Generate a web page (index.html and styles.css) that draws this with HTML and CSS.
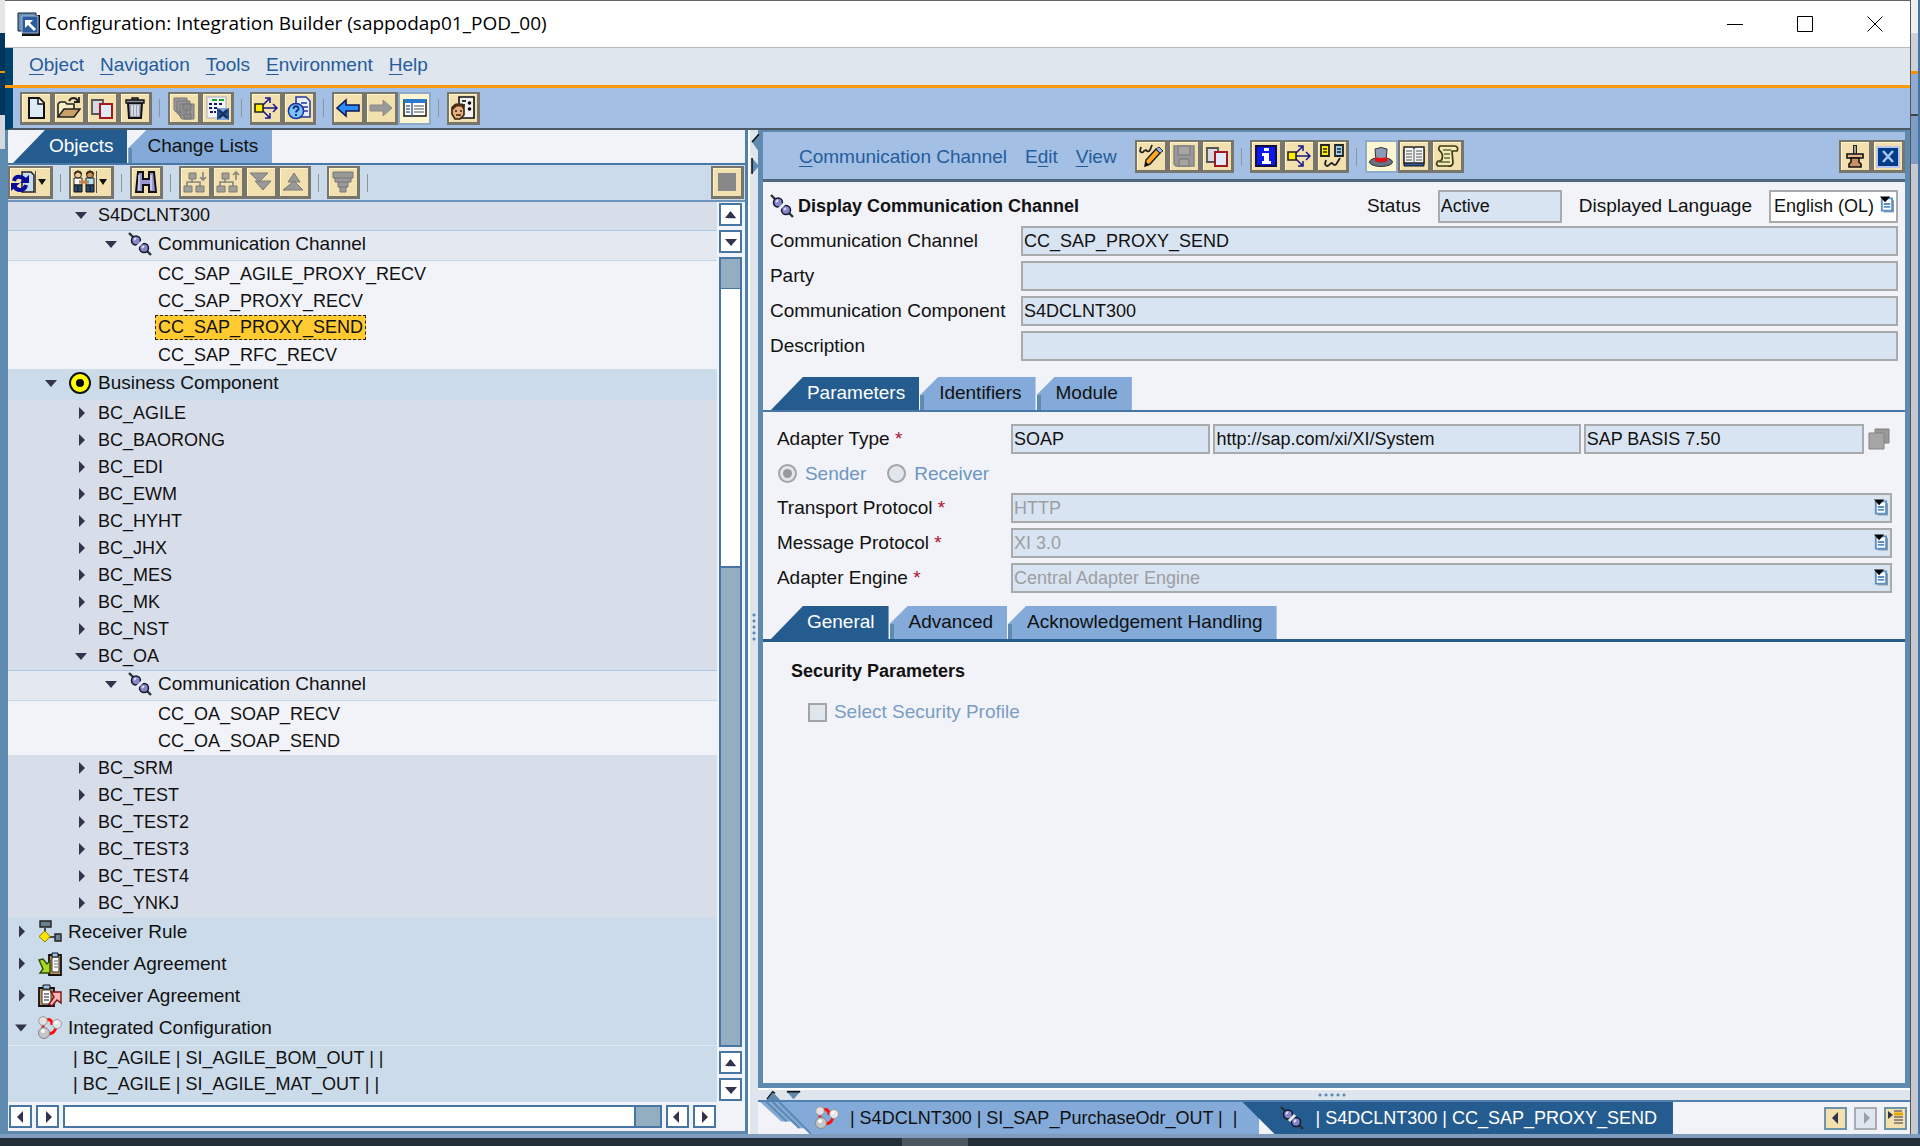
FILE: index.html
```html
<!DOCTYPE html>
<html lang="en">
<head>
<meta charset="utf-8">
<title>Configuration: Integration Builder (sappodap01_POD_00)</title>
<link rel="stylesheet" href="styles.css">
</head>
<body>
<svg class="defs" aria-hidden="true">
  <symbol id="new" viewBox="0 0 24 24"><path d="M5 2h10l5 5v15H5z" fill="#dcecf8" stroke="#111" stroke-width="2"/><path d="M14 2v6h6" fill="#fff" stroke="#111" stroke-width="1.5"/></symbol>
  <symbol id="open" viewBox="0 0 24 24"><path d="M1 21V8l2-2h5l2 2h7v5" fill="#f5efc4" stroke="#222" stroke-width="1.6"/><path d="M1 21l6-8h16l-6 8z" fill="#c8a068" stroke="#222" stroke-width="1.6"/><path d="M12 5c2-4 7-4 9 0M22 1v5h-5" fill="none" stroke="#222" stroke-width="1.8"/></symbol>
  <symbol id="copy" viewBox="0 0 24 24"><path d="M2 4h11v14H2z" fill="#d8d8e0" stroke="#555" stroke-width="1.8"/><path d="M10 8h12v14H10z" fill="#dfeaf6" stroke="#a01822" stroke-width="2"/></symbol>
  <symbol id="trash" viewBox="0 0 24 24"><path d="M5 7h14l-1 15H6z" fill="#9aa3b0" stroke="#111" stroke-width="2"/><path d="M9 9v11M12 9v11M15 9v11" stroke="#e8ecf2" stroke-width="1.5"/><path d="M3 4h18v3H3zM9 2h6v2H9z" fill="#8a93a0" stroke="#111" stroke-width="1.4"/></symbol>
  <symbol id="saveall" viewBox="0 0 24 24" fill="#999" stroke="#777"><path d="M2 2h13v14H4l-2-2zM5 5h13v14H7l-2-2zM8 8h14v15H10l-2-2z"/><path d="M11 8h8v6h-8zM12 18h7v5h-7z" fill="#8a8a8a"/></symbol>
  <symbol id="listx" viewBox="0 0 24 24"><path d="M2 1h19v21H2z" fill="#f2f5fa" stroke="#aab" /><path d="M7 4h5M14 4h5" stroke="#18a028" stroke-width="2"/><path d="M4 8h3M9 8h3M14 8h3M4 12h3M9 12h3M5 16h3M9 16h2" stroke="#18186a" stroke-width="1.8"/><path d="M12 12h12v12H12z" fill="#2a4f9a"/><path d="M12 12l6 4 6-4M12 24l6-4 6 4" fill="#7fa8d8"/><path d="M14 14l8 8M22 14l-8 8" stroke="#16305e" stroke-width="2.400"/></symbol>
  <symbol id="where" viewBox="0 0 24 24"><path d="M8 12h14M8 10l7-7M8 14l7 7M19 8l4 4-4 4M11 2h5v5M11 22h5v-5" fill="none" stroke="#14148c" stroke-width="1.500"/><path d="M1 8h8v8H1z" fill="#ffee00" stroke="#222" stroke-width="1.6"/></symbol>
  <symbol id="help" viewBox="0 0 24 24"><path d="M9 1h10l4 4v16H9z" fill="#e8edf8" stroke="#223a9a" stroke-width="1.5"/><path d="M14 7h6M15 11h6M17 15h4" stroke="#223a9a" stroke-width="1.5"/><circle cx="9" cy="15" r="7.6" fill="#7cc4f8" stroke="#1834a0" stroke-width="1.5"/><path d="M6.5 13c0-4 5.500-3.500 5 0-.5 1.500-2.500 2-2.500 3.500M9 18v2" fill="none" stroke="#102a90" stroke-width="2"/></symbol>
  <symbol id="back" viewBox="0 0 24 24"><path d="M1 12l9-8v5h13v6H10v5z" fill="#2c8cff" stroke="#101850" stroke-width="1.6"/></symbol>
  <symbol id="fwd" viewBox="0 0 24 24"><path d="M23 12l-9-8v5H1v6h13v5z" fill="#999" stroke="#888"/></symbol>
  <symbol id="tree" viewBox="0 0 24 24"><path d="M1 4h22v16H1z" fill="#fff" stroke="#111" stroke-width="1.4"/><path d="M1 3h22v4H1z" fill="#2a7ac8"/><path d="M9 7v13M3 10h4M3 13h4M3 16h4" stroke="#4a6a9a" stroke-width="1.600"/><path d="M11 10h10M11 13h10M11 16h10" stroke="#888" stroke-width="1.400"/></symbol>
  <symbol id="person" viewBox="0 0 24 24"><path d="M8 1h15v21H8z" fill="#f2f2f2" stroke="#111" stroke-width="1.6"/><path d="M11 5h4M11 9h3" stroke="#333" stroke-width="2"/><circle cx="18.500" cy="7" r="1.8"/><circle cx="18.500" cy="13" r="1.800"/><path d="M1 13c0-6 12-6 12 0v6l-4 4H4l-3-5z" fill="#e8b080" stroke="#3a2010" stroke-width="1.600"/><path d="M1 13l4-4h6l2 3" stroke="#4a2a10" stroke-width="3" fill="none"/><path d="M4 15h2M9 15h2M5 19h5" stroke="#3a2010" stroke-width="1.600"/></symbol>
  <symbol id="refresh" viewBox="0 0 24 24"><path d="M11 2h9l3 3v17H11z" fill="#c8dcf0" stroke="#222" stroke-width="1.5"/><path d="M3 11q1-5 6-4 3 0 5 3M15 15q-1 5-6 5-4 0-6-4" fill="none" stroke="#0a0a98" stroke-width="4"/><path d="M18 5v8h-9zM0 21v-8h9z" fill="#0a0a98"/></symbol>
  <symbol id="people" viewBox="0 0 24 24"><path d="M2 8h8v7H2z" fill="#fff" stroke="#222"/><path d="M14 8h8v7h-8z" fill="#aee4f4" stroke="#222"/><path d="M2 15h8v7H2zM14 15h8v7h-8z" fill="#28486e" stroke="#111"/><circle cx="6" cy="4.500" r="3.500" fill="#f0c8a0" stroke="#222"/><circle cx="18" cy="4.500" r="3.500" fill="#c89050" stroke="#222"/><path d="M2.500 4q3.500-5 7 0M14.500 4q3.500-5 7 0" fill="none" stroke="#3a2a14" stroke-width="2"/><path d="M7 12h10" stroke="#c08050" stroke-width="3"/><path d="M6 16v6M18 16v6" stroke="#111"/></symbol>
  <symbol id="find" viewBox="0 0 24 24"><path d="M4 2h5v7h6V2h5l2 20h-7v-7H9v7H2z" fill="#9a98d0" stroke="#111" stroke-width="2"/><path d="M5 5v15M17 5v15" stroke="#d4d4f4" stroke-width="1.600"/></symbol>
  <symbol id="expand" viewBox="0 0 24 24"><path d="M6 3h7v6H6zM1 16h8v6H1zM13 16h8v6h-8z" fill="#a0a098" stroke="#7a7a74"/><path d="M9 9v4M4 16v-4h13v4M20 2v8M17 7l3 3 3-3" fill="none" stroke="#85857d" stroke-width="1.600"/></symbol>
  <symbol id="collapse" viewBox="0 0 24 24"><path d="M6 3h7v6H6zM1 16h8v6H1zM13 16h8v6h-8z" fill="#a0a098" stroke="#7a7a74"/><path d="M9 9v4M4 16v-4h13v4M20 10V2M17 5l3-3 3 3" fill="none" stroke="#85857d" stroke-width="1.600"/></symbol>
  <symbol id="downs" viewBox="0 0 24 24" fill="#999" stroke="#7c7c74"><path d="M6 11h16l-8 9z"/><path d="M1 3h18l-9 9z"/></symbol>
  <symbol id="ups" viewBox="0 0 24 24" fill="#999" stroke="#7c7c74"><path d="M6 12h12l-6-9z"/><path d="M1 20h20l-9-9z"/></symbol>
  <symbol id="filter" viewBox="0 0 24 24" fill="#999" stroke="#777"><path d="M2 2h20v6h-2v4h-3v5h-2v5H9v-5H7v-5H4V8H2z"/><path d="M3 8h18M6 12h12M8 17h8" /></symbol>
  <symbol id="stop" viewBox="0 0 24 24"><path d="M3 3h18v18H3z" fill="#888"/></symbol>
  <symbol id="plug" viewBox="0 0 24 24"><path d="M1 1l22 22" stroke="#233" stroke-width="2.400"/><circle cx="8" cy="8.500" r="4.500" fill="#8486cc" stroke="#15152c" stroke-width="1.500"/><circle cx="16" cy="16" r="4.500" fill="#8486cc" stroke="#15152c" stroke-width="1.500"/><path d="M9 15l6-6" stroke="#edf0f8" stroke-width="3"/><path d="M6 8l2-2M14 16l2-2" stroke="#dcdcf8" stroke-width="2"/></symbol>
  <symbol id="bcomp" viewBox="0 0 24 24"><circle cx="12" cy="12" r="10" fill="#ffff00" stroke="#111" stroke-width="2"/><circle cx="12" cy="12" r="4"/></symbol>
  <symbol id="rule" viewBox="0 0 24 24"><path d="M7 8v7M10 17h8" stroke="#222" stroke-width="1.600"/><path d="M2 1h11v6H2z" fill="#66808e" stroke="#222" stroke-width="1.400"/><path d="M7 11l5 5.500-5 5.500-6-5.500z" fill="#ffe600" stroke="#997a00"/><path d="M17 14h6v7h-6z" fill="#6c8496" stroke="#222" stroke-width="1.400"/></symbol>
  <symbol id="sagree" viewBox="0 0 24 24"><path d="M11 3h12v20H11z" fill="#c89858" stroke="#111" stroke-width="1.800"/><path d="M14 5h7v15h-7z" fill="#fff" stroke="#333"/><path d="M14 1h6v4h-6z" fill="#9cc4e4" stroke="#111"/><path d="M16 9h4M16 12h4M16 15h4" stroke="#666"/><path d="M1 8l4-1 4 5 3-3v12H2l3-4z" fill="#a8d820" stroke="#2c4a08" stroke-width="1.400"/></symbol>
  <symbol id="ragree" viewBox="0 0 24 24"><path d="M1 4h15v18H1z" fill="#c89858" stroke="#111" stroke-width="1.800"/><path d="M4 6h9v14H4z" fill="#fff" stroke="#333"/><path d="M5 1h7v4H5z" fill="#9cc4e4" stroke="#111"/><path d="M6 10h5M6 13h5M6 16h5" stroke="#666" stroke-width="1.400"/><path d="M13 8h10v11l-4-3-5 6-3-2 5-7z" fill="#ffb4b4" stroke="#7a1010" stroke-width="1.400"/></symbol>
  <symbol id="iconf" viewBox="0 0 24 24"><path d="M8 4q6-2 6 5M18 11q-1 6-7 7M5 8v5" fill="none" stroke="#ff1010" stroke-width="3"/><circle cx="5" cy="5" r="4.300" fill="#e2e2e2" stroke="#999"/><circle cx="19" cy="8" r="4.500" fill="#e8e8e8" stroke="#999"/><circle cx="6" cy="17" r="5.500" fill="#c6c6c6" stroke="#888"/><circle cx="5" cy="15" r="2" fill="#fff"/><circle cx="18" cy="6.500" r="1.500" fill="#fff"/></symbol>
  <symbol id="edit" viewBox="0 0 24 24"><path d="M2 3l-1 4q2 3 4 0l2-1q2 3 4 0l2-5" fill="none" stroke="#222" stroke-width="1.700"/><path d="M6 22l1-6L17 5l4 4L11 20z" fill="#ffa820" stroke="#222" stroke-width="1.500"/><path d="M17 5l3-2 4 4-3 2z" fill="#9ab4e8" stroke="#333"/><path d="M6 22l1-4 3 3z"/></symbol>
  <symbol id="save" viewBox="0 0 24 24" fill="#999" stroke="#848484" stroke-width="1.500"><path d="M2 2h20v20H4l-2-2z"/><path d="M6 2h12v9H6zM7 15h10v7H7z" fill="#a6a6a0"/></symbol>
  <symbol id="info" viewBox="0 0 24 24"><path d="M2 2h20v20H2z" fill="#0c18f0" stroke="#101040" stroke-width="2"/><path d="M10 4h5v3h-5zM8 9h7v8h2v3H8v-3h2v-5H8z" fill="#fff"/></symbol>
  <symbol id="compare" viewBox="0 0 24 24"><path d="M1 1h8v11H1z" fill="#fff000" stroke="#222" stroke-width="1.800"/><path d="M15 1h8v11h-8z" fill="#9ccdf0" stroke="#222" stroke-width="1.800"/><path d="M3 5h4M3 8h4M17 5h4M17 8h4" stroke="#222" stroke-width="1.400"/><path d="M6 16l-1 4q2 4 5 0l2-1q3 4 5 0l3-5" fill="none" stroke="#222" stroke-width="1.800"/></symbol>
  <symbol id="hat" viewBox="0 0 24 24"><ellipse cx="12" cy="17" rx="11.500" ry="4.500" fill="#6a7080" stroke="#333"/><path d="M6 4q6-3 12 0l-1 12q-5 2-10 0z" fill="#8c9ab4" stroke="#334"/><path d="M6 12q6 2 12 0v4q-6 2-12 0z" fill="#ee1010"/></symbol>
  <symbol id="book" viewBox="0 0 24 24"><path d="M2 5h20v17H2z" fill="#2a5aa0" stroke="#111"/><path d="M2 3h9l1 1 1-1h9v16H2z" fill="#f4f4f4" stroke="#222" stroke-width="1.400"/><path d="M12 4v16M4 7h6M4 10h6M4 13h6M4 16h6M14 7h6M14 10h6M14 13h6M14 16h6" stroke="#555"/></symbol>
  <symbol id="scroll" viewBox="0 0 24 24"><path d="M5 2h15q4 1 2 5h-5l1 12q-1 4-5 3H3q-3-2 0-5h3q3-5 0-9-4-3-1-6z" fill="#f2ecb4" stroke="#3a3a18" stroke-width="1.700"/><path d="M8 6h8M9 10h6M9 14h6M4 18h11" stroke="#66663a" stroke-width="1.400"/></symbol>
  <symbol id="pin" viewBox="0 0 24 24"><path d="M12 1v10" stroke="#222" stroke-width="4"/><path d="M12 2v8" stroke="#ccc" stroke-width="1.500"/><path d="M4 10h16v4H4z" fill="#e8b88c" stroke="#111" stroke-width="1.600"/><path d="M8 14h8v4l2 2v3H6v-3l2-2z" fill="#c89060" stroke="#111" stroke-width="1.600"/></symbol>
  <symbol id="close" viewBox="0 0 24 24"><path d="M1 3h22v20H1z" fill="#003c88" stroke="#bcc4f0" stroke-width="2"/><path d="M7 7l10 11M17 7L7 18" stroke="#a8c4f0" stroke-width="2.600"/></symbol>
  <symbol id="drop" viewBox="0 0 16 18"><path d="M5 5h11v13H5z" fill="#8899aa"/><path d="M3 3h11v13H3z" fill="#fff" stroke="#5c90c4" stroke-width="2"/><path d="M5 9h7M5 12h7" stroke="#5c90c4" stroke-width="2"/><path d="M1 1h11L6.500 7z"/></symbol>
  <symbol id="au" viewBox="0 0 16 16"><path d="M4 12h10l-4-5z" fill="#c8d4e4"/><path d="M2 11h11L7.500 4z" fill="#33334d"/></symbol>
  <symbol id="ad" viewBox="0 0 16 16"><path d="M2 5h12L8 12z" fill="#33334d"/></symbol>
  <symbol id="al" viewBox="0 0 16 16"><path d="M10 2v12L4 8z" fill="#33334d"/></symbol>
  <symbol id="ar" viewBox="0 0 16 16"><path d="M6 2v12l6-6z" fill="#33334d"/></symbol>
</svg>

<div class="desk">
  <div class="behind behind-left"></div>
  <main class="window">
    <header class="titlebar">
      <svg class="app" viewBox="0 0 24 24"><path d="M5 3h18v21H5z" fill="#111"/><path d="M1 1h18v18H1z" fill="#6c90b4" stroke="#123"/><path d="M5 4h16v17H5z" fill="#2c5c9c" stroke="#9bd"/><path d="M8 8h8l-3 3 6 6-2 2-6-6-3 3z" fill="#fff"/></svg>
      <h1>Configuration: Integration Builder (sappodap01_POD_00)</h1>
      <button class="wbtn" aria-label="Minimize"><svg viewBox="0 0 16 16"><path d="M0 8.500h16"/></svg></button>
      <button class="wbtn" aria-label="Maximize"><svg viewBox="0 0 16 16"><path d="M.5.5h15v15H.5z"/></svg></button>
      <button class="wbtn" aria-label="Close"><svg viewBox="0 0 16 16"><path d="M.5.5l15 15M15.500.5l-15 15"/></svg></button>
    </header>
    <nav class="menubar">
      <a href="#"><u>O</u>bject</a><a href="#"><u>N</u>avigation</a><a href="#"><u>T</u>ools</a><a href="#"><u>E</u>nvironment</a><a href="#"><u>H</u>elp</a>
    </nav>
    <div class="toolbar main-tools">
      <button class="tb" aria-label="New"><svg><use href="#new"/></svg></button><button class="tb" aria-label="Open"><svg><use href="#open"/></svg></button><button class="tb" aria-label="Copy"><svg><use href="#copy"/></svg></button><button class="tb" aria-label="Delete"><svg><use href="#trash"/></svg></button>
      <i class="sep"></i>
      <button class="tb" aria-label="Save all"><svg><use href="#saveall"/></svg></button><button class="tb" aria-label="Close all"><svg><use href="#listx"/></svg></button>
      <i class="sep"></i>
      <button class="tb" aria-label="Where used"><svg><use href="#where"/></svg></button><button class="tb" aria-label="Help"><svg><use href="#help"/></svg></button>
      <i class="sep"></i>
      <button class="tb" aria-label="Back"><svg><use href="#back"/></svg></button><button class="tb" aria-label="Forward"><svg><use href="#fwd"/></svg></button><button class="tb on" aria-label="Navigation area"><svg><use href="#tree"/></svg></button>
      <i class="sep"></i>
      <button class="tb" aria-label="Personal settings"><svg><use href="#person"/></svg></button>
    </div>

    <div class="work">
      <section class="left">
        <div class="tabs left-tabs"><button class="tab active">Objects</button><button class="tab">Change Lists</button></div>
        <div class="toolbar tree-tools">
          <button class="tb split" aria-label="Refresh"><svg><use href="#refresh"/></svg><i class="caret"></i></button>
          <i class="sep"></i>
          <button class="tb split" aria-label="Scenarios"><svg><use href="#people"/></svg><i class="caret"></i></button>
          <i class="sep"></i>
          <button class="tb" aria-label="Find"><svg><use href="#find"/></svg></button>
          <i class="sep"></i>
          <button class="tb" aria-label="Expand node"><svg><use href="#expand"/></svg></button><button class="tb" aria-label="Collapse node"><svg><use href="#collapse"/></svg></button><button class="tb" aria-label="Expand all"><svg><use href="#downs"/></svg></button><button class="tb" aria-label="Collapse all"><svg><use href="#ups"/></svg></button>
          <i class="sep"></i>
          <button class="tb" aria-label="Filter"><svg><use href="#filter"/></svg></button>
          <i class="sep"></i>
          <button class="tb end" aria-label="Stop"><svg><use href="#stop"/></svg></button>
        </div>
        <div class="tree-area">
          <ul class="tree">
            <li class="row comp first open">S4DCLNT300</li>
            <li class="row chan open"><svg><use href="#plug"/></svg>Communication Channel</li>
            <li class="row leaf">CC_SAP_AGILE_PROXY_RECV</li>
            <li class="row leaf">CC_SAP_PROXY_RECV</li>
            <li class="row leaf"><span class="sel">CC_SAP_PROXY_SEND</span></li>
            <li class="row leaf">CC_SAP_RFC_RECV</li>
            <li class="row group open"><svg><use href="#bcomp"/></svg>Business Component</li>
            <li class="row comp shut">BC_AGILE</li>
            <li class="row comp shut">BC_BAORONG</li>
            <li class="row comp shut">BC_EDI</li>
            <li class="row comp shut">BC_EWM</li>
            <li class="row comp shut">BC_HYHT</li>
            <li class="row comp shut">BC_JHX</li>
            <li class="row comp shut">BC_MES</li>
            <li class="row comp shut">BC_MK</li>
            <li class="row comp shut">BC_NST</li>
            <li class="row comp open">BC_OA</li>
            <li class="row chan open"><svg><use href="#plug"/></svg>Communication Channel</li>
            <li class="row leaf">CC_OA_SOAP_RECV</li>
            <li class="row leaf">CC_OA_SOAP_SEND</li>
            <li class="row comp shut">BC_SRM</li>
            <li class="row comp shut">BC_TEST</li>
            <li class="row comp shut">BC_TEST2</li>
            <li class="row comp shut">BC_TEST3</li>
            <li class="row comp shut">BC_TEST4</li>
            <li class="row comp shut">BC_YNKJ</li>
            <li class="row root shut"><svg><use href="#rule"/></svg>Receiver Rule</li>
            <li class="row root shut"><svg><use href="#sagree"/></svg>Sender Agreement</li>
            <li class="row root shut"><svg><use href="#ragree"/></svg>Receiver Agreement</li>
            <li class="row root open"><svg><use href="#iconf"/></svg>Integrated Configuration</li>
            <li class="row conf rule-top">| BC_AGILE | SI_AGILE_BOM_OUT | |</li>
            <li class="row conf">| BC_AGILE | SI_AGILE_MAT_OUT | |</li>
          </ul>
          <div class="vscroll">
            <button class="sb" aria-label="Up"><svg><use href="#au"/></svg></button><button class="sb" aria-label="Down"><svg><use href="#ad"/></svg></button>
            <div class="vtrack"><div class="vthumb"></div></div>
            <button class="sb" aria-label="Up"><svg><use href="#au"/></svg></button><button class="sb" aria-label="Down"><svg><use href="#ad"/></svg></button>
          </div>
        </div>
        <div class="hscroll">
          <button class="sb" aria-label="Left"><svg><use href="#al"/></svg></button><button class="sb" aria-label="Right"><svg><use href="#ar"/></svg></button>
          <div class="htrack"><div class="hthumb"></div></div>
          <button class="sb" aria-label="Left"><svg><use href="#al"/></svg></button><button class="sb" aria-label="Right"><svg><use href="#ar"/></svg></button>
        </div>
      </section>

      <div class="vsplit">
        <svg viewBox="0 0 9 44"><path d="M9 4v18L2 12z" fill="#5f8ab0"/><path d="M9 4L2 12" stroke="#111" stroke-width="1.500"/><path d="M2 28v16l7-8z" fill="#5f8ab0"/><path d="M2 28v16" stroke="#111" stroke-width="1.500"/></svg>
        <i class="dots"></i>
      </div>

      <section class="right">
        <div class="editor">
          <div class="toolbar editor-tools">
            <a href="#"><u>C</u>ommunication Channel</a><a href="#">E<u>d</u>it</a><a href="#"><u>V</u>iew</a>
            <button class="tb" aria-label="Switch edit mode"><svg><use href="#edit"/></svg></button><button class="tb" aria-label="Save"><svg><use href="#save"/></svg></button><button class="tb" aria-label="Copy object"><svg><use href="#copy"/></svg></button>
            <i class="sep"></i>
            <button class="tb" aria-label="Properties"><svg><use href="#info"/></svg></button><button class="tb" aria-label="Where-used list"><svg><use href="#where"/></svg></button><button class="tb" aria-label="Compare"><svg><use href="#compare"/></svg></button>
            <i class="sep"></i>
            <button class="tb on" aria-label="Header"><svg><use href="#hat"/></svg></button><button class="tb" aria-label="Documentation"><svg><use href="#book"/></svg></button><button class="tb" aria-label="History"><svg><use href="#scroll"/></svg></button>
            <button class="tb end" aria-label="Pin"><svg><use href="#pin"/></svg></button><button class="tb" aria-label="Close editor"><svg><use href="#close"/></svg></button>
          </div>

          <div class="head">
            <svg><use href="#plug"/></svg><h2>Display Communication Channel</h2>
            <label for="status">Status</label><input class="field status" id="status" value="Active" readonly>
            <label for="lang">Displayed Language</label>
            <span class="pick lang"><select class="field" id="lang"><option>English (OL)</option></select><svg><use href="#drop"/></svg></span>
          </div>
          <div class="form">
            <label for="cc">Communication Channel</label><input class="field" id="cc" value="CC_SAP_PROXY_SEND" readonly>
            <label for="party">Party</label><input class="field" id="party" readonly>
            <label for="comp">Communication Component</label><input class="field" id="comp" value="S4DCLNT300" readonly>
            <label for="desc">Description</label><input class="field" id="desc" readonly>
          </div>

          <div class="tabs param-tabs"><button class="tab active">Parameters</button><button class="tab">Identifiers</button><button class="tab">Module</button></div>
          <div class="params">
            <label for="adapter">Adapter Type <b>*</b></label>
            <div class="trio"><input class="field" id="adapter" value="SOAP" readonly><input class="field" aria-label="Namespace" value="http://sap.com/xi/XI/System" readonly><input class="field" aria-label="Software component" value="SAP BASIS 7.50" readonly><svg viewBox="0 0 22 22"><path d="M7 1h14v14H7z" fill="#999" stroke="#808080"/><path d="M1 5h15v16H1z" fill="#a6a6a6" stroke="#848484"/></svg></div>
            <div class="radios">
              <label><input type="radio" name="dir" checked disabled>Sender</label><label><input type="radio" name="dir" disabled>Receiver</label>
            </div>
            <label for="tp">Transport Protocol <b>*</b></label><span class="pick"><select class="field" id="tp" disabled><option>HTTP</option></select><svg><use href="#drop"/></svg></span>
            <label for="mp">Message Protocol <b>*</b></label><span class="pick"><select class="field" id="mp" disabled><option>XI 3.0</option></select><svg><use href="#drop"/></svg></span>
            <label for="ae">Adapter Engine <b>*</b></label><span class="pick"><select class="field" id="ae" disabled><option>Central Adapter Engine</option></select><svg><use href="#drop"/></svg></span>
          </div>

          <div class="tabs general-tabs"><button class="tab active">General</button><button class="tab">Advanced</button><button class="tab">Acknowledgement Handling</button></div>
          <div class="general">
            <h3>Security Parameters</h3>
            <label><input type="checkbox" disabled>Select Security Profile</label>
          </div>
        </div>

        <div class="hsplit">
          <svg viewBox="0 0 46 12"><path d="M6 12L13 2l9 10z" fill="#5f8ab0"/><path d="M6 11l7-9 3 2" fill="none" stroke="#111" stroke-width="1.500"/><path d="M30 2h16l-8 9z" fill="#5f8ab0"/><path d="M30 2h16" stroke="#111" stroke-width="2"/></svg>
          <i class="dots"></i>
        </div>
        <nav class="docs">
          <svg class="stack" viewBox="0 0 50 33" preserveAspectRatio="none"><path d="M20 0h30v33z" fill="#83aad8"/><path d="M2 0h18l25 27h-7L31 20h-9z" fill="#83aad8"/><path d="M8 0l19 20M14 0l25 27M20 0l30 33" fill="none" stroke="#5f8ab0" stroke-width="2"/></svg>
          <button class="doc"><svg><use href="#iconf"/></svg>| S4DCLNT300 | SI_SAP_PurchaseOdr_OUT | &nbsp;|</button><button class="doc current"><svg><use href="#plug"/></svg>| S4DCLNT300 | CC_SAP_PROXY_SEND</button>
          <div class="pager"><button aria-label="Previous"><svg><use href="#al"/></svg></button><button class="off" aria-label="Next" disabled><svg><use href="#ar"/></svg></button><button aria-label="List"><svg viewBox="0 0 16 16"><path d="M0 1v8l5-4z" fill="#33334d"/><path d="M6 1h8M6 7h9M6 10h9M6 13h9" stroke="#33334d"/><path d="M6 4h9" stroke="#e8a800" stroke-width="3"/></svg></button></div>
        </nav>
      </section>
    </div>
  </main>
  <div class="behind behind-right"></div>
</div>
<footer class="taskbar"><i></i></footer>
</body>
</html>
```
FILE: styles.css
```css
* { box-sizing: border-box; }
body {
  margin: 0;
  min-height: 100vh;
  display: flex;
  flex-direction: column;
  background: #f2f3f8;
  color: #111;
  font: 19px/26px "Liberation Sans", Arial, sans-serif;
}
button, input, select { font: inherit; color: inherit; margin: 0; border-radius: 0; }
button { padding: 0; border: 0; background: none; }
ul, h1, h2, h3 { margin: 0; padding: 0; }
svg { display: block; flex: none; width: 24px; height: 24px; }
.defs { position: absolute; width: 0; height: 0; }

/* desktop around the window */
.desk { flex: 1; display: flex; padding-bottom: 4px; background: #7f9cbc; }
.behind { flex: none; }
.behind-left { width: 5px; background: linear-gradient(#e6e6e6 33px, #00365c 33px 71px, #f49200 71px 73px, #00365c 73px 115px, #d5d8de 115px 149px, #5f8ab0 149px); }
.behind-right { width: 9px; border-right: 2px solid #4876a4; background: linear-gradient(#efefef 33px, #cbd1d8 33px 71px, #f49200 71px 74px, #8fabcf 74px 114px, #444 114px 116px, #7f9cc4 116px 164px, #c6c9d0 164px); }
.window { flex: 1; min-width: 0; display: flex; flex-direction: column; border-top: 1px solid #666; border-right: 1px solid #555; }
.taskbar { height: 8px; background: #222f37; }
.taskbar i { display: block; width: 66px; height: 8px; margin-left: 47%; background: #4b565e; }

.titlebar { display: flex; align-items: center; height: 47px; padding-left: 12px; background: #fff; border-bottom: 1px solid #b8b8c0; }
.titlebar h1 { flex: 1; margin-left: 4px; padding-bottom: 2px; font: 19px/26px "Open Sans", "Noto Sans", sans-serif; color: #000; }
.wbtn { width: 70px; height: 46px; display: grid; place-items: center; }
.wbtn svg { width: 16px; height: 16px; fill: none; stroke: #000; }

.menubar { display: flex; align-items: center; gap: 16px; height: 37px; padding: 0 16px 4px; background: #e0e6ed; border-left: 8px solid #00426e; }
a { color: #255c9c; text-decoration: none; }
u { text-underline-offset: 3px; }

.toolbar { display: flex; align-items: center; }
.main-tools { position: relative; height: 45px; padding: 3px 7px 0; background: #a3bfe4; border-left: 8px solid #00426e; border-bottom: 2px solid #4a5866; }
.main-tools::before { content: ""; position: absolute; left: -8px; right: 0; top: 0; height: 3px; background: #ff9a0c; }
.tb { flex: none; display: flex; align-items: center; justify-content: center; width: 33px; height: 33px; background: #f3e0af; border: 2px solid #77756c; border-right-width: 3px; border-bottom-width: 3px; box-shadow: inset 1px 1px #fff6cc; }
.tb.on { background: #fdf6d2; border: 2px solid #8fabcb; }
.tb.split { width: 45px; justify-content: space-between; padding: 0 2px 0 1px; }
.caret { width: 13px; height: 22px; border-left: 1px solid #555; position: relative; }
.caret::after { content: ""; position: absolute; left: 2px; top: 8px; border: 4px solid transparent; border-top: 6px solid #111; border-bottom: 0; }
.sep { width: 1px; height: 18px; margin: 0 8px 0 7px; border-left: 1px solid #8c949e; }
.end { margin-left: auto; }

.work { flex: 1; display: flex; min-height: 0; background: #f2f3f8; }
.left { flex: 0 0 39%; min-width: 0; display: flex; flex-direction: column; border-left: 3px solid #5f8ab0; border-bottom: 3px solid #5f8ab0; border-right: 3px solid #4f80ae; }

/* slanted tabs */
.tabs { display: flex; align-items: flex-end; gap: 1px; border-bottom: 2px solid #4777a6; }
.tab { height: 33px; padding: 0 14px 2px 19px; background: linear-gradient(#5f8ab0, #5f8ab0) left bottom / 4px 15px no-repeat, #83aad8; clip-path: polygon(18px 0, 100% 0, 100% 100%, 0 100%, 0 18px); }
.tab.active { padding-left: 36px; background: #255c90; color: #fff; clip-path: polygon(32px 0, 100% 0, 100% 100%, 0 100%); }
.left-tabs { padding-left: 5px; }

.tree-tools { height: 37px; border-bottom: 2px solid #6c94bc; background: #cbdbe9; }
.tree-tools .end { margin-right: 1px; }
.tree-area { flex: 1; display: flex; background: #f2f3f8; }
.tree { flex: 1; list-style: none; background: #cbdbe9; }
.row { display: flex; align-items: center; height: 27px; padding-bottom: 1px; white-space: nowrap; }
.row svg { margin-right: 6px; }
.row::before { width: 16px; height: 16px; margin-right: 9px; flex: none; background: #33334d; }
.open::before { content: ""; clip-path: polygon(2px 5px, 14px 5px, 8px 12px); }
.shut::before { content: ""; clip-path: polygon(6px 2px, 12px 8px, 6px 14px); }
.comp { padding-left: 65px; background: #d8dee9; font-size: 18px; }
.first { height: 28px; padding-bottom: 2px; }
.chan { height: 31px; padding-left: 95px; padding-bottom: 3px; background: #e4e8f1; border-top: 1px solid #a9c6e4; border-bottom: 1px solid #c6d8e8; }
.leaf { padding-left: 150px; padding-bottom: 2px; background: #f2f3f8; font-size: 18px; }
.group { height: 31px; padding-left: 35px; padding-bottom: 3px; }
.root { height: 32px; padding-left: 5px; padding-bottom: 3px; }
.conf { padding-left: 65px; padding-bottom: 3px; font-size: 18px; }
.rule-top { border-top: 1px solid #dce8f2; }
.sel { margin-left: -3px; padding: 0 2px; line-height: 23px; background: #ffcb30; border: 1px dashed #222; }

.vscroll { flex: none; width: 28px; display: flex; flex-direction: column; align-items: center; gap: 4px; padding: 1px 0; }
.sb { flex: none; display: grid; place-items: center; width: 23px; height: 23px; background: #fff; border: 2px solid #4876a4; }
.sb svg { width: 16px; height: 16px; }
.vtrack { flex: 1; width: 23px; padding-top: 29px; background: #92aec0; border: 2px solid #4876a4; }
.vthumb { height: 37%; background: #fff; border-top: 1px solid #4876a4; border-bottom: 2px solid #4876a4; }
.hscroll { display: flex; align-items: center; gap: 4px; height: 29px; padding: 0 29px 0 1px; }
.htrack { flex: 1; display: flex; height: 23px; background: #92aec0; border: 2px solid #4876a4; }
.hthumb { width: 96%; background: #fff; border-right: 2px solid #4876a4; }

.vsplit { flex: none; position: relative; width: 10px; background: #dfe5ec; border-left: 2px solid #fff; }
.vsplit svg { width: 9px; height: 44px; }
.dots { position: absolute; background: radial-gradient(circle, #5f8ab0 1px, transparent 2px) 0 0 / 6px 6px; }
.vsplit .dots { left: 1px; top: 48%; width: 6px; height: 30px; }

.right { flex: 1; min-width: 0; display: flex; flex-direction: column; }
.editor { flex: 1; display: flex; flex-direction: column; border: solid #5f8ab0; border-width: 2px 5px 5px; }
.editor-tools { height: 50px; padding: 2px 0 0 36px; background: #a3bfe4; border-bottom: 3px solid #50667c; white-space: nowrap; }
.editor-tools a { margin-right: 18px; }

.field { width: 100%; height: 30px; min-width: 0; padding: 0 1px; background: #d9e4f2; border: 2px solid #a9aaac; font-size: 18px; appearance: none; outline: 0; }
select.field { line-height: 24px; opacity: 1; }
select:disabled { color: #9c9ea2; }
.head { display: flex; align-items: center; height: 44px; padding: 4px 7px 0; white-space: nowrap; }
.head h2 { flex: 1; margin-left: 4px; font-size: 18px; line-height: 26px; }
.head .status { width: 124px; height: 33px; margin: 0 17px; }
.head .lang { width: 129px; margin-left: 17px; }
.lang .field { height: 33px; padding-left: 3px; background: #fff; }
.pick { position: relative; display: block; }
.pick svg { position: absolute; right: 4px; top: 5px; width: 15px; height: 18px; pointer-events: none; }
.form { display: grid; grid-template-columns: 251px 1fr; row-gap: 5px; align-items: center; padding: 0 7px; }
.form label { line-height: 30px; }

.param-tabs { margin-top: 16px; padding-left: 8px; }
.params { display: grid; grid-template-columns: 234px 1fr; row-gap: 5px; align-items: center; padding: 12px 13px 13px 14px; }
.params b { color: #b01030; font-weight: 400; }
.trio { display: grid; grid-template-columns: 200fr 368fr 281fr 25px; gap: 3px; align-items: center; }
.trio svg { width: 22px; height: 22px; margin-left: 1px; }
.radios { grid-column: 1 / -1; display: flex; gap: 20px; height: 29px; align-items: center; color: #6d96c0; }
.radios label { display: flex; align-items: center; }
input[type="radio"], input[type="checkbox"] { appearance: none; width: 19px; height: 19px; border: 2px solid #a4a4a4; background: #dfe6ee; }
input[type="radio"] { margin: 0 8px 0 1px; border-radius: 50%; display: grid; place-items: center; }
input[type="radio"]:checked::after { content: ""; width: 9px; height: 9px; border-radius: 50%; background: #999; }
.general-tabs { padding-left: 8px; border-bottom: 3px solid #255c90; }
.general { flex: 1; padding: 16px 28px; }
.general h3 { font-size: 18px; line-height: 26px; }
.general label { display: flex; align-items: center; gap: 7px; margin: 15px 0 0 17px; color: #7a9dc2; }

.hsplit { position: relative; height: 12px; background: #dfe5ec; border-top: 2px solid #fff; }
.hsplit svg { width: 46px; height: 10px; }
.hsplit .dots { left: 50%; top: 2px; width: 30px; height: 6px; margin-left: -17px; }
.docs { display: flex; height: 34px; border-top: 2px solid #4f80ae; white-space: nowrap; font-size: 18px; }
.docs .stack { width: 53px; height: 32px; }
.doc { display: flex; align-items: center; gap: 11px; padding: 0 22px 1px 4px; background: #83aad8; }
.doc.current { margin-left: -17px; padding: 0 16px 1px 38px; background: #255c90; color: #fff; clip-path: polygon(0 0, 100% 0, 100% 100%, 32px 100%); }
.pager { display: flex; align-items: center; gap: 7px; margin-left: auto; padding-right: 3px; }
.pager button { display: grid; place-items: center; width: 23px; height: 23px; background: #f3e0af; border: 2px solid #6f94a8; }
.pager svg { width: 16px; height: 16px; }
.pager .off { background: #dfe6ee; border-color: #a8acb4; }
.off svg { opacity: .4; }
```
